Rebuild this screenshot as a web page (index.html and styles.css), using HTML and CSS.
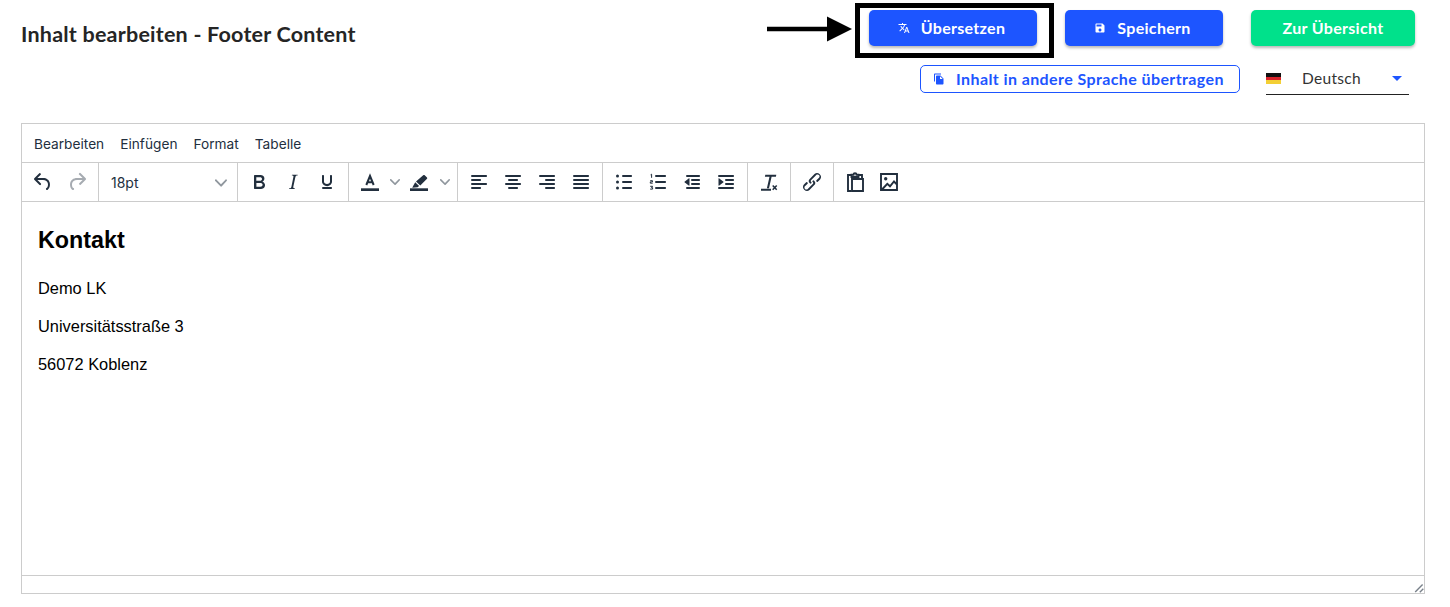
FILE: index.html
```html
<!DOCTYPE html>
<html lang="de">
<head>
<meta charset="utf-8">
<title>Inhalt bearbeiten - Footer Content</title>
<link rel="stylesheet" href="styles.css">
</head>
<body>
<main class="page">
  <header class="head">
    <h1 class="title">Inhalt bearbeiten - Footer Content</h1>
    <div class="actions">
      <div class="action-row">
        <button class="btn btn-blue btn-translate"><svg class="btn-icon" viewBox="0 0 24 24"><path d="M12.87 15.07l-2.54-2.51.03-.03c1.74-1.94 2.98-4.17 3.71-6.53H17V4h-7V2H8v2H1v1.99h11.17C11.5 7.92 10.44 9.75 9 11.35 8.07 10.32 7.3 9.19 6.69 8h-2c.73 1.63 1.73 3.17 2.98 4.56l-5.09 5.02L4 19l5-5 3.11 3.11.76-2.04zM18.5 10h-2L12 22h2l1.12-3h4.75L21 22h2l-4.5-12zm-2.62 7l1.62-4.33L19.12 17h-3.24z"/></svg>Übersetzen</button>
        <button class="btn btn-blue btn-save"><svg class="btn-icon" viewBox="0 0 24 24"><path d="M17 3H5c-1.11 0-2 .9-2 2v14c0 1.1.89 2 2 2h14c1.1 0 2-.9 2-2V7l-4-4zm-5 16c-1.66 0-3-1.34-3-3s1.34-3 3-3 3 1.34 3 3-1.34 3-3 3zm3-10H5V5h10v4z"/></svg>Speichern</button>
        <button class="btn btn-green">Zur Übersicht</button>
      </div>
      <div class="action-row sub-row">
        <button class="btn-outline"><svg class="btn-icon" viewBox="0 0 24 24"><path d="M16 1H4c-1.1 0-2 .9-2 2v14h2V3h12V1zm-1 4l6 6v10c0 1.1-.9 2-2 2H7.99C6.89 23 6 22.1 6 21l.01-14c0-1.1.89-2 1.99-2h7zm-1 7h5.5L14 6.5V12z"/></svg>Inhalt in andere Sprache übertragen</button>
        <div class="lang">
          <span class="flag"><i class="fl-black"></i><i class="fl-red"></i><i class="fl-gold"></i></span>
          <span class="lang-name">Deutsch</span>
          <span class="caret"></span>
        </div>
      </div>
    </div>
  </header>

  <section class="editor">
    <nav class="menubar">
      <span>Bearbeiten</span><span>Einfügen</span><span>Format</span><span>Tabelle</span>
    </nav>
    <div class="toolbar">
      <div class="group">
        <span class="tb"><svg class="ic" viewBox="0 0 24 24"><path d="M6.4 8H12c3.7 0 6.2 2 6.8 5.1.6 2.7-.4 5.6-2.3 6.8a1 1 0 0 1-1-1.8c1.1-.6 1.8-2.7 1.4-4.6-.5-2.1-2.1-3.5-4.9-3.5H6.4l3.3 3.3a1 1 0 1 1-1.4 1.4l-5-5a1 1 0 0 1 0-1.4l5-5a1 1 0 0 1 1.4 1.4L6.4 8z"/></svg></span>
        <span class="tb off"><svg class="ic" viewBox="0 0 24 24"><path d="M17.6 10H12c-2.8 0-4.4 1.4-4.9 3.5-.4 2 .3 4 1.4 4.6a1 1 0 1 1-1 1.8c-2-1.2-2.9-4.1-2.3-6.8.6-3 3-5.1 6.8-5.1h5.6l-3.3-3.3a1 1 0 1 1 1.4-1.4l5 5a1 1 0 0 1 0 1.4l-5 5a1 1 0 0 1-1.4-1.4l3.3-3.3z"/></svg></span>
      </div>
      <div class="group">
        <span class="size-select">18pt<svg class="chev" viewBox="0 0 10 10"><path d="M8.7 2.2c.3-.3.8-.3 1 0 .4.4.4.9 0 1.2L5.7 7.8c-.3.3-.9.3-1.2 0L.2 3.4a.8.8 0 0 1 0-1.2c.3-.3.8-.3 1.1 0L5 6l3.7-3.8z"/></svg></span>
      </div>
      <div class="group">
        <span class="tb"><svg class="ic" viewBox="0 0 24 24"><path d="M7.8 19c-.3 0-.5 0-.6-.2l-.2-.5V5.7c0-.2 0-.4.2-.5l.6-.2h5c1.5 0 2.7.3 3.5 1 .7.6 1.1 1.4 1.1 2.5a3 3 0 0 1-.6 1.9c-.4.6-1 1-1.6 1.2.4.1.9.3 1.3.6s.8.7 1 1.2c.4.4.5 1 .5 1.6 0 1.3-.4 2.3-1.3 3-.8.7-2.1 1-3.8 1H7.8zm5-8.3c.6 0 1.2-.1 1.6-.5.4-.3.6-.7.6-1.3 0-1.1-.8-1.7-2.3-1.7H9.3v3.5h3.4zm.5 6c.7 0 1.3-.1 1.7-.4.4-.4.6-.9.6-1.5s-.2-1-.7-1.4c-.4-.3-1-.4-2-.4H9.4v3.8h4z"/></svg></span>
        <span class="tb"><svg class="ic" viewBox="0 0 24 24"><path d="M16.7 4.7l-.1.9h-.3c-.6 0-1 0-1.4.3-.3.3-.4.6-.5 1.1l-2.1 9.8v.6c0 .5.4.8 1.4.8h.2l-.2.8H8l.2-.8h.2c1.1 0 1.8-.5 2-1.5l2-9.8.1-.5c0-.6-.4-.8-1.4-.8h-.3l.2-.9h5.8z"/></svg></span>
        <span class="tb"><svg class="ic" viewBox="0 0 24 24"><path d="M16 5c.6 0 1 .4 1 1v5.5a4 4 0 0 1-.4 1.8l-1 1.4a5.3 5.3 0 0 1-5.5 1 5 5 0 0 1-1.6-1c-.5-.4-.8-.9-1.1-1.4a4 4 0 0 1-.4-1.8V6c0-.6.4-1 1-1s1 .4 1 1v5.5c0 .3 0 .6.2 1l.6.7a3.3 3.3 0 0 0 2.2.8 3.4 3.4 0 0 0 2.2-.8c.3-.2.4-.5.6-.8l.2-.9V6c0-.6.4-1 1-1zM8 17h8c.6 0 1 .4 1 1s-.4 1-1 1H8a1 1 0 0 1 0-2z"/></svg></span>
      </div>
      <div class="group">
        <span class="tb"><svg class="ic" viewBox="0 0 24 24"><path d="M3 18.3h18V21H3z"/><path class="st" d="M8.300 15 12 6l3.700 9M9.500 12.200h5"/></svg></span>
        <span class="tb-more"><svg class="chev" viewBox="0 0 10 10"><path d="M8.7 2.2c.3-.3.8-.3 1 0 .4.4.4.9 0 1.2L5.7 7.8c-.3.3-.9.3-1.2 0L.2 3.4a.8.8 0 0 1 0-1.2c.3-.3.8-.3 1.1 0L5 6l3.700-3.800z"/></svg></span>
        <span class="tb"><svg class="ic" viewBox="0 0 24 24"><path d="M3 18.300h18V21H3z"/><path d="M16.200 5.200c.5-.4 1.100-.4 1.500 0l2.300 2.200c.4.400.4 1 0 1.400l-6.700 6.700-4.300-4.100z"/><path d="M8.200 12.200l3.900 3.800-1.500 1.300-5.400.5z"/></svg></span>
        <span class="tb-more wide"><svg class="chev" viewBox="0 0 10 10"><path d="M8.7 2.2c.3-.3.8-.3 1 0 .4.4.4.9 0 1.2L5.7 7.8c-.3.3-.9.3-1.2 0L.2 3.4a.8.8 0 0 1 0-1.2c.3-.3.8-.3 1.1 0L5 6l3.700-3.800z"/></svg></span>
      </div>
      <div class="group">
        <span class="tb"><svg class="ic" viewBox="0 0 24 24"><path d="M5 5h14c.6 0 1 .4 1 1s-.4 1-1 1H5a1 1 0 1 1 0-2zm0 4h8c.6 0 1 .4 1 1s-.4 1-1 1H5a1 1 0 1 1 0-2zm0 8h8c.6 0 1 .4 1 1s-.4 1-1 1H5a1 1 0 0 1 0-2zm0-4h14c.6 0 1 .4 1 1s-.4 1-1 1H5a1 1 0 0 1 0-2z"/></svg></span>
        <span class="tb"><svg class="ic" viewBox="0 0 24 24"><path d="M5 5h14c.6 0 1 .4 1 1s-.4 1-1 1H5a1 1 0 1 1 0-2zm3 4h8c.6 0 1 .4 1 1s-.4 1-1 1H8a1 1 0 1 1 0-2zm0 8h8c.6 0 1 .4 1 1s-.4 1-1 1H8a1 1 0 0 1 0-2zm-3-4h14c.6 0 1 .4 1 1s-.4 1-1 1H5a1 1 0 0 1 0-2z"/></svg></span>
        <span class="tb"><svg class="ic" viewBox="0 0 24 24"><path d="M5 5h14c.6 0 1 .4 1 1s-.4 1-1 1H5a1 1 0 1 1 0-2zm6 4h8c.6 0 1 .4 1 1s-.4 1-1 1h-8a1 1 0 0 1 0-2zm0 8h8c.6 0 1 .4 1 1s-.4 1-1 1h-8a1 1 0 0 1 0-2zm-6-4h14c.6 0 1 .4 1 1s-.4 1-1 1H5a1 1 0 0 1 0-2z"/></svg></span>
        <span class="tb"><svg class="ic" viewBox="0 0 24 24"><path d="M5 5h14c.6 0 1 .4 1 1s-.4 1-1 1H5a1 1 0 1 1 0-2zm0 4h14c.6 0 1 .4 1 1s-.4 1-1 1H5a1 1 0 1 1 0-2zm0 8h14c.6 0 1 .4 1 1s-.4 1-1 1H5a1 1 0 0 1 0-2zm0-4h14c.6 0 1 .4 1 1s-.4 1-1 1H5a1 1 0 0 1 0-2z"/></svg></span>
      </div>
      <div class="group">
        <span class="tb"><svg class="ic" viewBox="0 0 24 24"><path d="M11 5h8c.6 0 1 .4 1 1s-.4 1-1 1h-8a1 1 0 0 1 0-2zm0 6h8c.6 0 1 .4 1 1s-.4 1-1 1h-8a1 1 0 0 1 0-2zm0 6h8c.6 0 1 .4 1 1s-.4 1-1 1h-8a1 1 0 0 1 0-2z"/><circle cx="5.500" cy="6" r="1.500"/><circle cx="5.500" cy="12" r="1.500"/><circle cx="5.500" cy="18" r="1.500"/></svg></span>
        <span class="tb"><svg class="ic" viewBox="0 0 24 24"><path d="M10 5h9c.6 0 1 .4 1 1s-.4 1-1 1h-9a1 1 0 0 1 0-2zm0 6h9c.6 0 1 .4 1 1s-.4 1-1 1h-9a1 1 0 0 1 0-2zm0 6h9c.6 0 1 .4 1 1s-.4 1-1 1h-9a1 1 0 0 1 0-2z"/><path class="st thin" d="M4.600 4.800l1-.6v3.600M4.200 10.700h2.300v1.200H4.300v1.300h2.400M4.200 16.300h2.400l-1.100 1.300h1.100v1.500H4.200"/></svg></span>
        <span class="tb"><svg class="ic" viewBox="0 0 24 24"><path d="M7 5h12c.6 0 1 .4 1 1s-.4 1-1 1H7a1 1 0 1 1 0-2zm5 4h7c.6 0 1 .4 1 1s-.4 1-1 1h-7a1 1 0 0 1 0-2zm0 4h7c.6 0 1 .4 1 1s-.4 1-1 1h-7a1 1 0 0 1 0-2zm-5 4h12a1 1 0 0 1 0 2H7a1 1 0 0 1 0-2zm2.500-8.200v6.400c0 .4-.5.6-.8.3l-4.200-3.200a.4.400 0 0 1 0-.6l4.200-3.200c.3-.3.8-.1.8.3z"/></svg></span>
        <span class="tb"><svg class="ic" viewBox="0 0 24 24"><path d="M5 5h14c.6 0 1 .4 1 1s-.4 1-1 1H5a1 1 0 1 1 0-2zm7 4h7c.6 0 1 .4 1 1s-.4 1-1 1h-7a1 1 0 0 1 0-2zm0 4h7c.6 0 1 .4 1 1s-.4 1-1 1h-7a1 1 0 0 1 0-2zm-7 4h14a1 1 0 0 1 0 2H5a1 1 0 0 1 0-2zm-.5-8.200v6.400c0 .4.5.6.8.3l4.200-3.200a.4.400 0 0 0 0-.6L5.300 8.500c-.3-.3-.8-.1-.8.3z"/></svg></span>
      </div>
      <div class="group">
        <span class="tb"><svg class="ic" viewBox="0 0 24 24"><path d="M8.300 4.800h11l-.4 1.900h-4.300l-2.600 11.500h-2.100L12.500 6.700H7.900zM4 18.800h10v2H4z"/><path class="st x-mark" d="M15.700 15.400l4 4.400M19.700 15.400l-4 4.400"/></svg></span>
      </div>
      <div class="group">
        <span class="tb"><svg class="ic" viewBox="0 0 24 24"><path d="M6.200 12.300a1 1 0 0 1 1.400 1.400l-2.100 2.100a2 2 0 1 0 2.700 2.700l4.800-4.800a1 1 0 0 0 0-1.400 1 1 0 1 1 1.300-1.400 3 3 0 0 1 0 4.200l-4.800 4.900a4 4 0 0 1-5.600-5.600l2.300-2.100zm11.600-.6a1 1 0 0 1-1.400-1.400l2.100-2.100a2 2 0 1 0-2.700-2.700L11 10.300a1 1 0 0 0 0 1.400 1 1 0 1 1-1.300 1.400 3 3 0 0 1 0-4.200l4.800-4.900a4 4 0 0 1 5.600 5.600l-2.300 2.100z"/></svg></span>
      </div>
      <div class="group last">
        <span class="tb"><svg class="ic" viewBox="0 0 24 24"><path class="st wide-st" d="M8 21H5V5h3M16 5h3v3.500M9 9h11v12H9zM8.500 7V4.800h2a1.500 1.500 0 0 1 3 0h2V7z"/></svg></span>
        <span class="tb"><svg class="ic" viewBox="0 0 24 24"><path class="st wide-st" d="M4 4h16v16H4zM5 19.500l5.300-5.700 2.700 2.500 4-4.800 3 3.200"/><circle cx="8.700" cy="8.700" r="1.700"/></svg></span>
      </div>
    </div>
    <article class="content">
      <h2 class="c-head">Kontakt</h2>
      <p>Demo LK</p>
      <p>Universitätsstraße 3</p>
      <p>56072 Koblenz</p>
    </article>
    <footer class="statusbar">
      <svg class="grip" viewBox="0 0 10 10"><path d="M8.100 1.100.7 8.500l1 1L9.100 2.100zM8.800 5.300 5.300 8.800l1 1 3.500-3.500z"/></svg>
    </footer>
  </section>
</main>

<div class="mark-box"></div>
<svg class="mark-arrow" viewBox="0 0 86 26"><path d="M0 10.800h61v4.400H0z"/><path d="M60 .5 85 13 60 25.500z"/></svg>
</body>
</html>
```

FILE: styles.css
```css
* { box-sizing: border-box; }
html, body { margin: 0; padding: 0; background: #fff; overflow: hidden; }
body { height: 607px; font-family: "Lato", "Noto Sans", sans-serif; color: #222; }

.page { padding: 0 25px 0 21px; }

.head { display: flex; justify-content: space-between; align-items: flex-start; padding-right: 10px; height: 95px; }
.title { margin: 22px 0 0; font-size: 21.5px; line-height: 24px; font-weight: 700; color: #252525; letter-spacing: .22px; white-space: nowrap; }

.actions { display: flex; flex-direction: column; align-items: flex-end; padding-top: 10px; }
.action-row { display: flex; gap: 28px; align-items: flex-start; }
.sub-row { margin-top: 19px; gap: 26px; padding-right: 6px; }

.btn { height: 36px; border: 0; border-radius: 5px; color: #fff; font: 700 16px/36px "Lato", "Noto Sans", sans-serif; letter-spacing: .3px; display: flex; align-items: center; justify-content: center; box-shadow: 0 2px 3px rgba(0,0,0,.28); padding: 0; }
.btn-blue { background: #1d55ff; padding-right: 3px; }
.btn-green { background: #00e18b; width: 164px; }
.btn-translate { width: 168px; }
.btn-save { width: 158px; }
.btn-icon { width: 12px; height: 12px; fill: currentColor; margin-right: 11px; flex: none; }

.btn-outline { width: 320px; height: 28px; border: 1px solid #1d55ff; border-radius: 5px; background: #fff; color: #1d55ff; font: 700 16px/26px "Lato", "Noto Sans", sans-serif; letter-spacing: .4px; display: flex; align-items: center; justify-content: center; padding: 0 3px 0 0; }

.lang { width: 143px; height: 30px; border-bottom: 1px solid #222; display: flex; align-items: center; position: relative; }
.flag { width: 15px; height: 11px; display: flex; flex-direction: column; margin-top: -2px; }
.flag i { display: block; flex: 1; }
.fl-black { background: #111; }
.fl-red { background: #d8232a; }
.fl-gold { background: #f3cf35; }
.lang-name { margin-left: 21px; font-size: 15.5px; letter-spacing: .3px; color: #333; margin-top: -4px; }
.caret { margin-left: 31px; margin-top: -2px; width: 0; height: 0; border-left: 5px solid transparent; border-right: 5px solid transparent; border-top: 5px solid #1d55ff; }

.editor { margin-top: 28px; height: 471px; border: 1px solid #ccc; display: flex; flex-direction: column; font-family: "Inter", sans-serif; color: #222f3e; }

.menubar { height: 39px; flex: none; border-bottom: 1px solid #ccc; display: flex; align-items: center; gap: 16px; padding: 1px 0 0 12px; font-size: 13.7px; }

.toolbar { height: 39px; flex: none; border-bottom: 1px solid #ccc; display: flex; }
.group { display: flex; align-items: center; padding: 0 4px; border-right: 1px solid #ccc; }
.group.last { border-right: 0; }
.tb { width: 34px; height: 38px; display: flex; align-items: center; justify-content: center; }
.tb.off { opacity: .4; }
.ic { width: 24px; height: 24px; fill: #222f3e; }
.st { fill: none; stroke: #222f3e; stroke-width: 2; }
.st.thin { stroke-width: 1; }
.st.x-mark { stroke-width: 1.5; }
.st.wide-st { stroke-width: 1.9; }
.chev { width: 10px; height: 10px; fill: rgba(34,47,62,.5); }
.tb-more { width: 15px; display: flex; justify-content: center; }
.tb-more.wide { width: 17px; }

.size-select { width: 130px; height: 38px; display: flex; align-items: center; justify-content: space-between; padding: 1px 6px 0 8px; font-size: 14px; color: #222f3e; }
.size-select .chev { width: 12px; height: 12px; }

.content { flex: 1; padding: 16px 16px 0; font-family: "Liberation Sans", Arial, sans-serif; font-size: 16.4px; line-height: 22px; color: #000; }
.c-head { margin: 10px 0 25px; font-size: 23.3px; line-height: 24px; font-weight: 700; }
.content p { margin: 0 0 16px; }

.statusbar { height: 18px; flex: none; border-top: 1px solid #ccc; display: flex; justify-content: flex-end; align-items: flex-end; }
.grip { width: 10px; height: 10px; fill: rgba(34,47,62,.6); }

.mark-box { position: absolute; left: 855px; top: 3px; width: 199px; height: 55px; border: 5px solid #000; pointer-events: none; }
.mark-arrow { position: absolute; left: 767px; top: 16px; width: 86px; height: 26px; fill: #000; }
```
